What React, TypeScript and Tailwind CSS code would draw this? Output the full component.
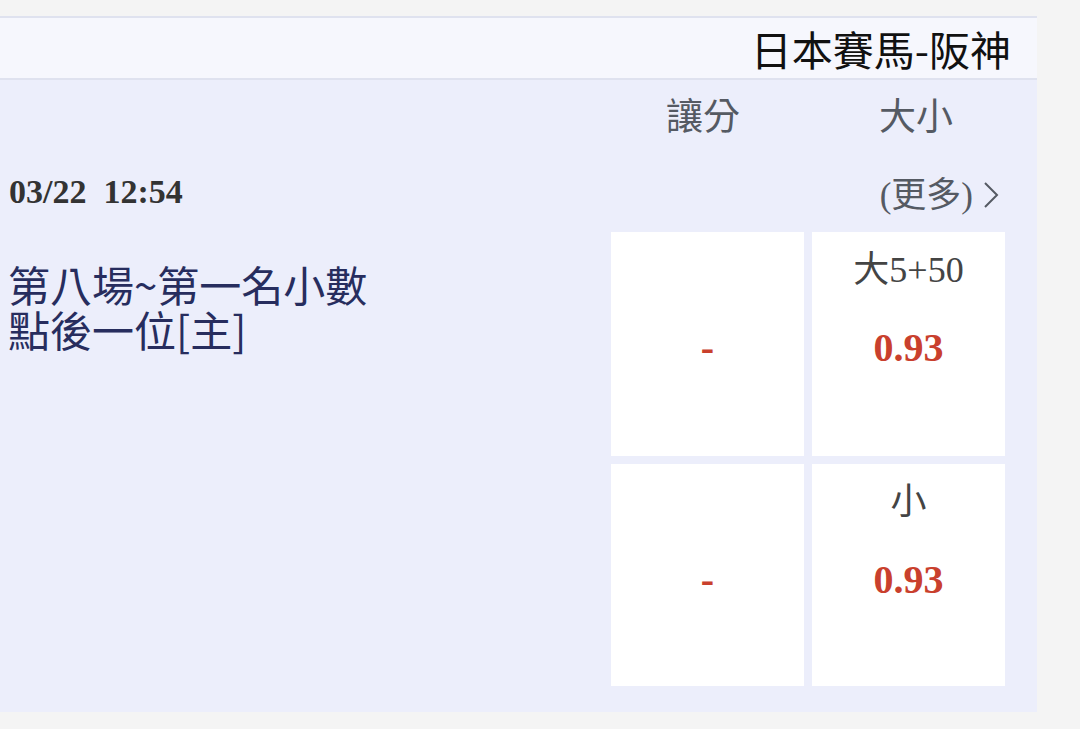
import React from "react";

const serifCjk = { fontFamily: '"Liberation Serif", "Noto Sans CJK TC", serif' };

function Cell({ label, odds }: { label?: string; odds: string }) {
  return (
    <div className="bg-white flex flex-col items-center" style={serifCjk}>
      <div className="h-[74px] pt-[18px] text-[36px] leading-[40px] text-[#444444]">{label ?? ""}</div>
      <div className="pt-[20px] text-[40px] leading-[44px] font-bold text-[#c9402d]">{odds}</div>
    </div>
  );
}

export default function App() {
  return (
    <div
      className="w-[1080px] h-[729px] bg-[#f4f4f4] pt-[16px] overflow-hidden"
      style={{ fontFamily: '"Noto Sans CJK TC", "Noto Sans", sans-serif' }}
    >
      <div className="w-[1037px] border-t-2 border-[#dfe2ef]">
        <div className="h-[62px] bg-[#f6f7fd] border-b-2 border-[#dfe2ef] flex items-center justify-end pr-[26px]">
          <span className="text-[41px] leading-none text-[#111111]">日本賽馬-阪神</span>
        </div>
        <div className="bg-[#eceefb] pr-[32px] pb-[26px] flex">
          <div className="flex-1 flex flex-col">
            <div className="h-[68px]" />
            <div className="h-[84px] flex items-center pl-[9px] pt-[4px]">
              <span
                className="text-[34px] leading-none font-bold text-[#333333] whitespace-pre"
                style={{ fontFamily: '"Liberation Serif", serif' }}
              >
                {"03/22  12:54"}
              </span>
            </div>
            <div className="pl-[8px] pt-[29px] text-[42px] leading-[45px] text-[#272d5e]">
              <div>第八場~第一名小數</div>
              <div>點後一位[主]</div>
            </div>
          </div>
          <div className="w-[394px] flex flex-col">
            <div className="h-[68px] flex items-center text-[37px] leading-none text-[#555a63]">
              <div className="w-[193px] text-center pr-[9px]">讓分</div>
              <div className="w-[8px]" />
              <div className="w-[193px] text-center pl-[15px]">大小</div>
            </div>
            <div className="h-[84px] flex items-center justify-end pt-[10px] pr-[5px] text-[#555a63]">
              <span className="text-[35px] leading-none" style={serifCjk}>
                (更多)
              </span>
              <svg width="18" height="30" viewBox="0 0 18 30" className="ml-[9px]">
                <polyline points="3,3 15,15 3,27" fill="none" stroke="#555a63" strokeWidth="2" />
              </svg>
            </div>
            <div className="grid grid-cols-[193px_193px] grid-rows-[224px_222px] gap-[8px]">
              <Cell odds="-" />
              <Cell label="大5+50" odds="0.93" />
              <Cell odds="-" />
              <Cell label="小" odds="0.93" />
            </div>
          </div>
        </div>
      </div>
    </div>
  );
}
